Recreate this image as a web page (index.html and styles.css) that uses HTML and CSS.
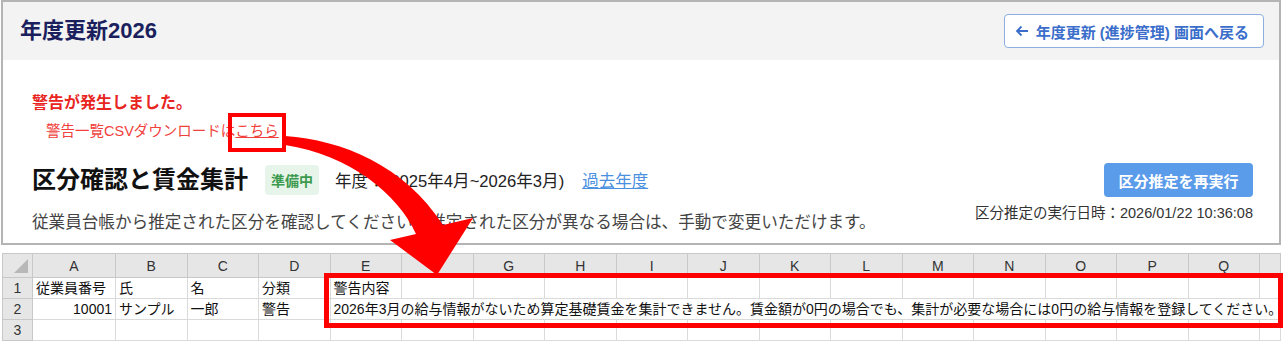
FILE: index.html
```html
<!DOCTYPE html>
<html>
    <head lang="ja">
        <meta charset="UTF-8">
        <title>年度更新2026</title>
        <link rel="stylesheet" href="styles.css">
    </head>
    <body>
        <div class="stage">
            <section class="panel">
                <header class="panel-head">
                    <h1 class="page-title">年度更新2026</h1>
                    <a class="back-btn">
                        <svg class="back-icon" viewBox="0 0 14 12" width="14" height="12"><path d="M13 6H2M6.5 1.5L2 6l4.5 4.5"/></svg>
                        <span>年度更新 (進捗管理) 画面へ戻る</span>
                    </a>
                </header>
                <div class="panel-body">
                    <p class="warn-title">警告が発生しました。</p>
                    <p class="warn-link">警告一覧CSVダウンロードは<a>こちら</a></p>
                    <div class="step-row">
                        <h2 class="step-title">区分確認と賃金集計</h2>
                        <span class="badge">準備中</span>
                        <span class="fiscal">年度：(2025年4月~2026年3月)</span>
                        <a class="past-link">過去年度</a>
                        <button class="rerun-btn">区分推定を再実行</button>
                    </div>
                    <div class="info-row">
                        <p class="desc">従業員台帳から推定された区分を確認してください。推定された区分が異なる場合は、手動で変更いただけます。</p>
                        <p class="run-at">区分推定の実行日時：2026/01/22 10:36:08</p>
                    </div>
                </div>
            </section>

            <table class="sheet">
                <colgroup>
                    <col class="col-rh">
                    <col class="col-a">
                    <col class="col-std"><col class="col-std"><col class="col-std"><col class="col-std">
                    <col class="col-std"><col class="col-std"><col class="col-std"><col class="col-std">
                    <col class="col-std"><col class="col-std"><col class="col-std"><col class="col-std">
                    <col class="col-std"><col class="col-std"><col class="col-std"><col class="col-std">
                    <col>
                </colgroup>
                <thead>
                    <tr>
                        <th class="corner"></th>
                        <th>A</th><th>B</th><th>C</th><th>D</th><th>E</th><th>F</th>
                        <th>G</th><th>H</th><th>I</th><th>J</th><th>K</th><th>L</th>
                        <th>M</th><th>N</th><th>O</th><th>P</th><th>Q</th><th></th>
                    </tr>
                </thead>
                <tbody>
                    <tr>
                        <th>1</th>
                        <td>従業員番号</td><td>氏</td><td>名</td><td>分類</td><td>警告内容</td>
                        <td></td><td></td><td></td><td></td><td></td><td></td>
                        <td></td><td></td><td></td><td></td><td></td><td></td>
                    </tr>
                    <tr>
                        <th>2</th>
                        <td class="num">10001</td><td>サンプル</td><td>一郎</td><td>警告</td>
                        <td class="spill" colspan="14">2026年3月の給与情報がないため算定基礎賃金を集計できません。賃金額が0円の場合でも、集計が必要な場合には0円の給与情報を登録してください。</td>
                    </tr>
                    <tr>
                        <th>3</th>
                        <td></td><td></td><td></td><td></td><td></td><td></td>
                        <td></td><td></td><td></td><td></td><td></td><td></td>
                        <td></td><td></td><td></td><td></td><td></td><td></td>
                    </tr>
                </tbody>
            </table>

            <!-- 注釈 -->
            <div class="mark mark-link"></div>
            <div class="mark mark-row"></div>
            <svg class="callout" viewBox="0 0 1284 345" width="1284" height="345">
                <path d="M285,136 C342,140 404,165 443,225 L473,218 L437,275 L390,240 L416,234 C398,194 350,155 285,145 Z"/>
            </svg>
        </div>
    </body>
</html>
```

FILE: styles.css
```css
*{
    box-sizing: border-box;
}
body{
    margin: 0;
    font-family: "Liberation Sans", "Noto Sans CJK JP", sans-serif;
    background: #fff;
}
p,h1,h2{
    margin: 0;
}
a{
    cursor: pointer;
}
.stage{
    position: relative;
    width: 1284px;
    height: 345px;
    overflow: hidden;
}

/* 上のパネル */
.panel{
    margin: 0 3px 0 1px;
    border: 2px solid #b4b4b4;
}
.panel-head{
    height: 58px;
    background: #f3f3f3;
    display: flex;
    align-items: center;
    justify-content: space-between;
    padding: 0 15px 0 17px;
}
.page-title{
    font-size: 22px;
    line-height: 28px;
    font-weight: bold;
    color: #1b1f5e;
}
.back-btn{
    display: flex;
    align-items: center;
    gap: 7px;
    height: 34px;
    padding: 0 14px 0 10px;
    border: 1px solid #8eaee0;
    border-radius: 4px;
    background: #fff;
    color: #3b6ecb;
    font-size: 15px;
    font-weight: bold;
}
.back-icon{
    fill: none;
    stroke: #3b6ecb;
    stroke-width: 1.8;
}
.panel-body{
    padding: 32px 26px 9px 29px;
}
.warn-title{
    font-size: 16px;
    line-height: 22px;
    font-weight: bold;
    color: #e8251f;
}
.warn-link{
    margin: 7px 0 0 14px;
    font-size: 14.5px;
    line-height: 20px;
    color: #f0413c;
}
.warn-link a{
    color: inherit;
    text-decoration: underline;
}
.step-row{
    display: flex;
    align-items: center;
    height: 34px;
    margin-top: 22px;
}
.step-title{
    margin-right: 17px;
    font-size: 24px;
    line-height: 30px;
    font-weight: bold;
    color: #111;
}
.badge{
    display: flex;
    align-items: center;
    height: 30px;
    padding: 0 6px;
    margin-right: 16px;
    border-radius: 4px;
    background: #e7f4e9;
    color: #3c9a4e;
    font-size: 14px;
    font-weight: bold;
}
.fiscal{
    margin-right: 18px;
    font-size: 16.6px;
    color: #222;
}
.past-link{
    font-size: 16.5px;
    color: #4a8fe0;
    text-decoration: underline;
}
.rerun-btn{
    margin-left: auto;
    width: 149px;
    height: 34px;
    border: 0;
    border-radius: 4px;
    background: #5a9bea;
    color: #fff;
    font-family: inherit;
    font-size: 15px;
    font-weight: bold;
}
.info-row{
    display: flex;
    justify-content: space-between;
    align-items: flex-start;
    margin-top: 7px;
}
.desc{
    margin-top: 8px;
    font-size: 16.6px;
    line-height: 22px;
    color: #444;
}
.run-at{
    font-size: 14.5px;
    line-height: 18px;
    color: #333;
}

/* エクセル */
.sheet{
    margin: 8px 3px 0 2px;
    width: 1279px;
    table-layout: fixed;
    border-collapse: collapse;
    border: 1px solid #a8a8a8;
    font-size: 14px;
    color: #111;
}
.col-rh{
    width: 30px;
}
.col-a{
    width: 83px;
}
.col-std{
    width: 71.5px;
}
.sheet thead tr{
    height: 24px;
}
.sheet tbody tr{
    height: 21px;
}
.sheet th{
    background: #e6e6e6;
    border: 1px solid #c8c8c8;
    font-weight: normal;
    color: #333;
    padding: 0;
    line-height: 20px;
}
.sheet td{
    border: 1px solid #dadada;
    padding: 0 3px;
    line-height: 20px;
    white-space: nowrap;
    overflow: visible;
}
.sheet td.num{
    text-align: right;
}
.sheet .corner{
    position: relative;
}
.sheet .corner::after{
    content: "";
    position: absolute;
    right: 4px;
    bottom: 4px;
    border-style: solid;
    border-width: 0 0 14px 14px;
    border-color: transparent transparent #b8b8b8 transparent;
}

/* 赤い注釈 */
.mark{
    position: absolute;
    border: 4px solid #ff0000;
}
.mark-link{
    left: 228px;
    top: 113px;
    width: 58px;
    height: 39px;
}
.mark-row{
    left: 324px;
    top: 273px;
    width: 959px;
    height: 55px;
    border-width: 5px;
}
.callout{
    position: absolute;
    left: 0;
    top: 0;
    pointer-events: none;
}
.callout path{
    fill: #ff0000;
}
```
